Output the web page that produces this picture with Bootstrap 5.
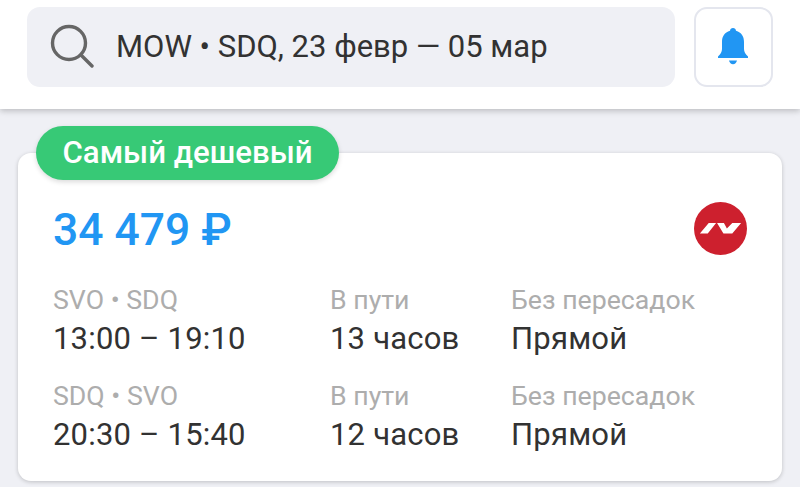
<!DOCTYPE html>
<html lang="ru"><head><meta charset="utf-8">
<link href="https://cdn.jsdelivr.net/npm/bootstrap@5.3.0/dist/css/bootstrap.min.css" rel="stylesheet">
<style>
html,body{height:487px;overflow:hidden}
body{background:#eff0f5;font-family:Roboto,"Liberation Sans",sans-serif;color:#323232}
.topbar{height:109px;background:#fff;box-shadow:0 2px 6px rgba(0,0,0,.22);padding:7px 27px 0 27px;gap:19px;position:relative}
.searchbox{width:648px;height:80px;background:#eff0f5;border-radius:13px;padding-left:23px;font-size:31px}
.searchbox svg{margin-right:22px;flex:none}
.searchbox span{margin-top:1px}
.bellbtn{width:79px;height:80px;border:2px solid #e4e6ee;border-radius:13px;background:#fff;flex:none}
.bellbtn svg{margin:-2px 1px 0 0}
.content{position:relative;padding:44px 18px 0}
.ticket{height:328px;border-radius:13px;border:0;box-shadow:0 1px 4px rgba(0,0,0,.2);background:#fff;padding:0 35px}
.tag{position:absolute;z-index:2;left:36px;top:17px;height:54px;padding:0 26.500px;border-radius:27px;background:#37c976;color:#fff;font-size:31.200px;font-weight:500;box-shadow:0 2px 5px rgba(0,0,0,.15)}
.price{font-size:44.400px;font-weight:500;color:#2196f3;height:78px;margin:37px 0 16px}
.price span{margin-top:2px}
.price svg{margin:-2px 0 0 0}
.flight{height:96px;font-size:31px;line-height:39px;letter-spacing:.2px}
.dim{font-size:26.700px;color:#adadad;line-height:32px;margin-bottom:3px;letter-spacing:0}
.c1{width:277px}.c2{width:181px}
</style></head><body>
<div class="topbar d-flex align-items-start">
 <div class="searchbox d-flex align-items-center">
  <svg width="44" height="46" viewBox="0 0 44 46" fill="none" stroke="#666" stroke-width="3.4"><circle cx="19" cy="19" r="16.500"/><path d="M31 31l11 11" stroke-linecap="round"/></svg>
  <span>MOW • SDQ, 23 февр — 05 мар</span>
 </div>
 <div class="bellbtn d-flex align-items-center justify-content-center">
  <svg width="30" height="37" viewBox="0 0 30 37" fill="#2196f3"><path d="M15 0c1.700 0 2.800 1 3 2.800C23.500 4.400 26 8.500 26 14v7c0 3 1.500 5 4 7.500V30H0v-1.500C2.500 26 4 24 4 21v-7C4 8.500 6.500 4.400 12 2.800 12.200 1 13.300 0 15 0z"/><path d="M11 32.500h8c-.6 2.400-2 3.700-4 3.700s-3.400-1.300-4-3.700z"/></svg>
 </div>
</div>
<div class="content">
 <div class="tag d-flex align-items-center">Самый дешевый</div>
 <div class="ticket card">
  <div class="price d-flex align-items-center justify-content-between">
   <span>34 479 ₽</span>
   <svg width="53" height="53" viewBox="0 0 54 54"><circle cx="27" cy="27" r="27" fill="#cd202e"/><path fill="#fff" d="M6 32l9-10.500h7.500L14 32zM23.500 21.500h7l3 5.500 5.500-5.500h9L39 32h-9z"/></svg>
  </div>
  <div class="flight d-flex">
   <div class="c1"><div class="dim">SVO • SDQ</div><div>13:00 – 19:10</div></div>
   <div class="c2"><div class="dim">В пути</div><div>13 часов</div></div>
   <div><div class="dim">Без пересадок</div><div>Прямой</div></div>
  </div>
  <div class="flight d-flex">
   <div class="c1"><div class="dim">SDQ • SVO</div><div>20:30 – 15:40</div></div>
   <div class="c2"><div class="dim">В пути</div><div>12 часов</div></div>
   <div><div class="dim">Без пересадок</div><div>Прямой</div></div>
  </div>
 </div>
</div>
</body></html>
